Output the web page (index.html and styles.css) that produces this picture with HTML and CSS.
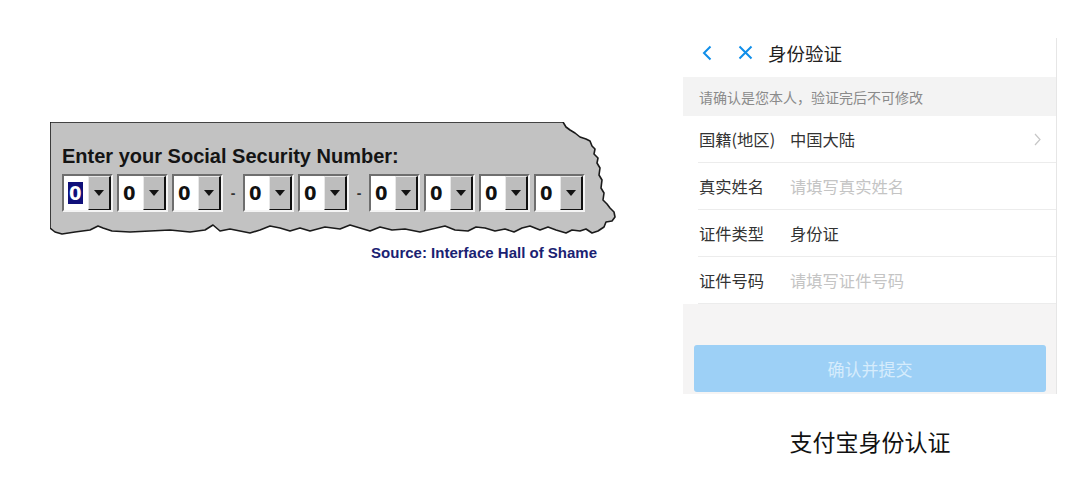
FILE: index.html
```html
<!DOCTYPE html>
<html lang="zh-CN">
<head>
<meta charset="utf-8">
<title>SSN vs 支付宝身份认证</title>
<link rel="stylesheet" href="styles.css">
</head>
<body>
<div class="page">
  <section class="left">
    <div class="panel">
      <svg class="panel-bg" width="566" height="116" viewBox="50 122 566 116" aria-hidden="true">
        <polygon points="50,122 563,122 566,127 570,130 575,133 580,137 586,139 590,141 592,146 595,149 594,154 598,158 597,163 600,168 599,175 602,180 601,188 604,193 603,200 607,204 610,208 614,212 615,217 612,221 606,222 604,227 598,231 592,233 586,229 580,231 572,230 566,233 556,230 548,227 540,230 530,226 522,228 514,232 505,229 495,231 485,228 476,227 468,231 455,230 445,226 432,229 420,232 405,229 392,230 380,227 370,231 360,228 350,225 340,229 325,227 310,231 300,228 290,231 280,228 270,226 260,230 250,233 240,231 230,229 220,231 213,225 205,230 190,232 170,230 150,231 130,232 112,231 103,228 98,226 90,230 75,232 62,234 55,232 50,228" fill="#c2c2c2" stroke="#1a1a1a" stroke-width="1.6" stroke-linejoin="round"/>
      </svg>
      <div class="ssn-title">Enter your Social Security Number:</div>
      <div class="combos">
        <div class="combo"><span class="val"><span class="sel">0</span></span><span class="btn"><i class="arrow"></i></span></div>
        <div class="combo"><span class="val">0</span><span class="btn"><i class="arrow"></i></span></div>
        <div class="combo"><span class="val">0</span><span class="btn"><i class="arrow"></i></span></div>
        <span class="dash">-</span>
        <div class="combo"><span class="val">0</span><span class="btn"><i class="arrow"></i></span></div>
        <div class="combo"><span class="val">0</span><span class="btn"><i class="arrow"></i></span></div>
        <span class="dash">-</span>
        <div class="combo"><span class="val">0</span><span class="btn"><i class="arrow"></i></span></div>
        <div class="combo"><span class="val">0</span><span class="btn"><i class="arrow"></i></span></div>
        <div class="combo"><span class="val">0</span><span class="btn"><i class="arrow"></i></span></div>
        <div class="combo"><span class="val">0</span><span class="btn"><i class="arrow"></i></span></div>
      </div>
    </div>
    <div class="source">Source: Interface Hall of Shame</div>
  </section>

  <section class="right">
    <div class="phone">
      <div class="nav">
        <svg class="nav-back" width="12" height="16" viewBox="0 0 12 16" aria-hidden="true"><polyline points="9.5,1.5 3,8 9.5,14.5" fill="none" stroke="#108ee9" stroke-width="2"/></svg>
        <svg class="nav-close" width="15" height="15" viewBox="0 0 15 15" aria-hidden="true"><path d="M1.5 1.5 L13.5 13.5 M13.5 1.5 L1.5 13.5" fill="none" stroke="#108ee9" stroke-width="2"/></svg>
        <span class="nav-title">身份验证</span>
      </div>
      <div class="notice">请确认是您本人，验证完后不可修改</div>
      <div class="form">
        <div class="row"><span class="label">国籍(地区)</span><span class="value">中国大陆</span>
          <svg class="chev" width="7" height="13" viewBox="0 0 7 13" aria-hidden="true"><polyline points="1,1 6,6.5 1,12" fill="none" stroke="#c6c6c6" stroke-width="1.2"/></svg></div>
        <div class="row"><span class="label">真实姓名</span><span class="value ph">请填写真实姓名</span></div>
        <div class="row"><span class="label">证件类型</span><span class="value">身份证</span></div>
        <div class="row"><span class="label">证件号码</span><span class="value ph">请填写证件号码</span></div>
      </div>
      <div class="footer">
        <div class="submit">确认并提交</div>
      </div>
    </div>
    <div class="caption">支付宝身份认证</div>
  </section>
</div>
</body>
</html>
```

FILE: styles.css
```css
html, body {
  margin: 0;
  padding: 0;
  background: #ffffff;
}

.page {
  display: flex;
  align-items: flex-start;
  width: 1081px;
  height: 480px;
  overflow: hidden;
  font-family: "Noto Sans CJK SC", "Noto Sans", sans-serif;
}

/* ---------- left: SSN dialog ---------- */
.left {
  margin-left: 50px;
  margin-top: 122px;
  width: 566px;
}

.panel {
  position: relative;
  height: 116px;
  box-sizing: border-box;
  padding: 24px 0 0 12px;
}

.panel-bg {
  position: absolute;
  left: 0;
  top: 0;
  z-index: 0;
}

.ssn-title,
.combos {
  position: relative;
  z-index: 1;
}

.ssn-title {
  font-family: "Liberation Sans", Arial, sans-serif;
  font-weight: bold;
  font-size: 20px;
  line-height: 20px;
  color: #141414;
}

.combos {
  display: flex;
  align-items: center;
  gap: 4px;
  margin-top: 8px;
}

.combo {
  display: flex;
  width: 51px;
  height: 38px;
  box-sizing: border-box;
  border: 2px solid;
  border-color: #6e6e6e #f4f4f4 #f4f4f4 #6e6e6e;
  background: #ffffff;
}

.val {
  flex: 1;
  display: flex;
  align-items: center;
  padding-left: 4px;
  font-family: "DejaVu Sans Condensed", "Liberation Sans", sans-serif;
  font-weight: bold;
  font-size: 20px;
  color: #111;
}

.sel {
  background: #10107a;
  color: #ffffff;
  line-height: 22px;
  padding: 0 1px;
}

.btn {
  width: 23px;
  box-sizing: border-box;
  background: #bdbdbd;
  border: 1px solid;
  border-color: #e8e8e8 #111 #111 #e8e8e8;
  border-right-width: 2px;
  display: flex;
  align-items: center;
  justify-content: center;
}

.arrow {
  width: 0;
  height: 0;
  border-left: 5px solid transparent;
  border-right: 5px solid transparent;
  border-top: 6px solid #111;
}

.dash {
  width: 12px;
  text-align: center;
  font-family: "Liberation Sans", Arial, sans-serif;
  font-weight: bold;
  font-size: 14px;
  line-height: 14px;
  color: #333;
}

.source {
  width: 547px;
  margin-top: 6px;
  text-align: right;
  font-family: "Liberation Sans", Arial, sans-serif;
  font-weight: bold;
  font-size: 15px;
  line-height: 18px;
  color: #1a2272;
}

/* ---------- right: Alipay form ---------- */
.right {
  margin-left: 67px;
  margin-top: 38px;
  width: 374px;
  display: flex;
  flex-direction: column;
}

.phone {
  width: 374px;
  box-sizing: border-box;
  border-right: 1px solid #e6e6e6;
  background: #ffffff;
}

.nav {
  height: 39px;
  box-sizing: border-box;
  padding-bottom: 10px;
  display: flex;
  align-items: center;
}

.nav-back {
  margin-left: 18px;
}

.nav-close {
  margin-left: 25px;
}

.nav-title {
  margin-left: 15px;
  font-size: 18.5px;
  line-height: 24px;
  color: #222;
}

.notice {
  height: 39px;
  display: flex;
  align-items: center;
  padding-left: 16px;
  background: #f3f3f3;
  font-size: 14px;
  color: #8a8a8a;
}

.form {
  background: #ffffff;
}

.row {
  display: flex;
  align-items: center;
  height: 47px;
  box-sizing: border-box;
  margin-left: 15px;
  padding-left: 1px;
  padding-right: 15px;
  border-bottom: 1px solid #ececec;
  font-size: 16.3px;
}

.label {
  width: 91px;
  color: #333;
}

.value {
  flex: 1;
  color: #333;
}

.value.ph {
  color: #c4c4c4;
}

.chev {
  display: block;
}

.footer {
  height: 90px;
  box-sizing: border-box;
  padding: 41px 10px 0 11px;
  background: #f5f4f4;
}

.submit {
  height: 47px;
  border-radius: 3px;
  background: #9dd0f6;
  color: #d6ecfc;
  font-size: 17px;
  display: flex;
  align-items: center;
  justify-content: center;
}

.caption {
  margin-top: 32px;
  text-align: center;
  font-size: 23px;
  line-height: 30px;
  color: #111;
}
```
